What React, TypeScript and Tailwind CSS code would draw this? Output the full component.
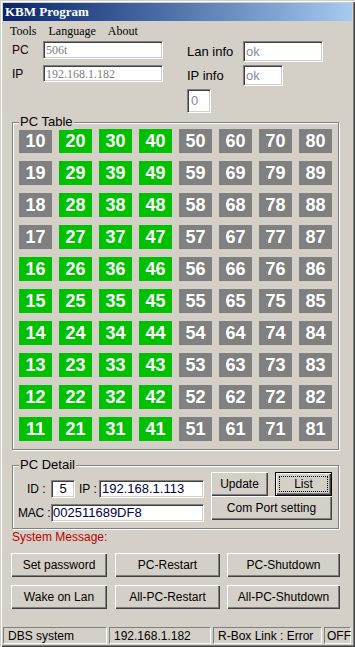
import React from "react";

const sans = "font-['Liberation_Sans',Arial,sans-serif]";
const serif = "font-['Liberation_Serif','Times_New_Roman',serif]";
const sunken =
  "bg-white border border-t-[#808080] border-l-[#808080] border-b-white border-r-white shadow-[inset_1px_1px_0_#404040,inset_-1px_-1px_0_#d4d0c8]";
const raised =
  "bg-[#d4d0c8] shadow-[inset_1px_1px_0_#ffffff,inset_-1px_-1px_0_#404040,inset_-2px_-2px_0_#808080]";
const panel =
  "border border-t-[#808080] border-l-[#808080] border-b-white border-r-white";

function Btn({ w, children }: { w: string; children: React.ReactNode }) {
  return (
    <div className={`${raised} ${w} h-[24px] flex items-center justify-center text-[12px] text-black`}>
      {children}
    </div>
  );
}

export default function App() {
  const rows = Array.from({ length: 10 }, (_, r) => r);
  const cols = [1, 2, 3, 4, 5, 6, 7, 8];
  return (
    <div
      className={`w-[355px] h-[647px] bg-[#d4d0c8] p-[3px] flex flex-col ${sans} shadow-[inset_1px_1px_0_#d4d0c8,inset_2px_2px_0_#ffffff,inset_-1px_-1px_0_#404040,inset_-2px_-2px_0_#808080]`}
    >
      {/* Title bar */}
      <div className={`h-[18px] bg-gradient-to-r from-[#0a246a] to-[#a6caf0] flex items-center pl-[2px] text-white font-bold text-[13px] ${serif}`}>
        KBM Program
      </div>
      {/* Menu */}
      <div className={`h-[19px] flex items-center gap-[12px] pl-[7px] text-[12px] text-black ${serif}`}>
        <span>Tools</span>
        <span>Language</span>
        <span>About</span>
      </div>
      {/* Top section */}
      <div className="flex h-[73px] ml-[9px]">
        <div className="w-[175px] flex flex-col">
          <div className="mt-[1px] flex items-center h-[18px]">
            <span className="w-[31px] text-[12px] text-[#200000]">PC</span>
            <div className={`${sunken} w-[120px] h-[18px] flex items-center pl-[2px] text-[12px] text-[#808080] ${serif}`}>506t</div>
          </div>
          <div className="mt-[6px] flex items-center h-[17px]">
            <span className="w-[31px] text-[12px] text-black">IP</span>
            <div className={`${sunken} w-[120px] h-[17px] flex items-center pl-[2px] text-[12px] text-[#808080] ${serif}`}>192.168.1.182</div>
          </div>
        </div>
        <div className="flex flex-col">
          <div className="mt-[1px] flex items-center h-[21px]">
            <span className="w-[56px] text-[13px] text-black">Lan info</span>
            <div className={`${sunken} w-[80px] h-[21px] flex items-center pl-[2px] text-[13px] text-[#8a8aa0]`}>ok</div>
          </div>
          <div className="mt-[3px] flex items-center h-[21px]">
            <span className="w-[56px] text-[13px] text-black">IP info</span>
            <div className={`${sunken} w-[40px] h-[21px] flex items-center pl-[2px] text-[13px] text-[#8a8aa0]`}>ok</div>
          </div>
          <div className="mt-[3px] flex">
            <div className={`${sunken} w-[24px] h-[24px] flex items-center pl-[3px] text-[13px] text-[#8a8aa0]`}>0</div>
          </div>
        </div>
      </div>
      {/* PC Table */}
      <div className="relative ml-[9px] mt-[9px] w-[327px] h-[328px] border border-[#808080] shadow-[inset_1px_1px_0_#ffffff,1px_1px_0_#ffffff] pl-[6px] pt-[6px]">
        <span className="absolute left-[6px] top-[-9px] px-[1px] bg-[#d4d0c8] text-[13px] leading-[16px] text-black">PC Table</span>
        <div className="grid grid-cols-[repeat(8,33px)] grid-rows-[repeat(10,24px)] gap-x-[7px] gap-y-[8px]">
          {rows.map((r) =>
            cols.map((c) => {
              const v = c * 10 + (r === 0 ? 0 : 10 - r);
              const green = (c >= 2 && c <= 4) || (c === 1 && r >= 4);
              return (
                <div
                  key={`${r}-${c}`}
                  className={`${green ? "bg-[#00c000]" : "bg-[#808080]"} flex items-center justify-center text-white font-bold text-[18px] leading-none`}
                >
                  {v}
                </div>
              );
            })
          )}
        </div>
      </div>
      {/* PC Detail */}
      <div className="relative ml-[9px] mt-[15px] w-[327px] h-[64px] border border-[#808080] shadow-[inset_1px_1px_0_#ffffff,1px_1px_0_#ffffff] flex">
        <span className="absolute left-[6px] top-[-9px] px-[1px] bg-[#d4d0c8] text-[13px] leading-[16px] text-black">PC Detail</span>
        <div className="w-[198px] pt-[14px] flex flex-col">
          <div className="flex items-center h-[18px] text-[12px] text-black whitespace-nowrap">
            <span className="ml-[14px] w-[24px]">ID :</span>
            <div className={`${sunken} w-[24px] h-[18px] flex items-center justify-center text-[13px]`}>5</div>
            <span className="ml-[4px] w-[20px]">IP :</span>
            <div className={`${sunken} w-[105px] h-[18px] flex items-center pl-[2px] text-[13px] text-[#000040]`}>192.168.1.113</div>
          </div>
          <div className="mt-[6px] flex items-center h-[18px] text-[12px] text-black whitespace-nowrap">
            <span className="ml-[5px] w-[33px] tracking-[-0.2px]">MAC :</span>
            <div className={`${sunken} w-[153px] h-[18px] flex items-center pl-[1px] text-[13px] text-[#000040]`}>002511689DF8</div>
          </div>
        </div>
        <div className="pt-[6px] flex flex-col">
          <div className="flex gap-[7px]">
            <Btn w="w-[57px]">Update</Btn>
            <div className="w-[57px] h-[24px] p-[4px] bg-[#d4d0c8] shadow-[inset_0_0_0_1px_#000000,inset_2px_2px_0_#ffffff,inset_-2px_-2px_0_#404040,inset_-3px_-3px_0_#808080]">
              <div className="w-full h-full border border-dotted border-black flex items-center justify-center text-[12px] text-black">
                List
              </div>
            </div>
          </div>
          <Btn w="w-[121px]">Com Port setting</Btn>
        </div>
      </div>
      {/* System message */}
      <div className="ml-[9px] h-[16px] leading-[16px] text-[12px] text-[#c00000]">System Message:</div>
      {/* Buttons */}
      <div className="mt-[8px] ml-[8px] flex">
        <Btn w="w-[96px]">Set password</Btn>
        <div className="w-[8px]" />
        <Btn w="w-[105px]">PC-Restart</Btn>
        <div className="w-[7px]" />
        <Btn w="w-[113px]">PC-Shutdown</Btn>
      </div>
      <div className="mt-[8px] ml-[8px] flex">
        <Btn w="w-[96px]">Wake on Lan</Btn>
        <div className="w-[8px]" />
        <Btn w="w-[105px]">All-PC-Restart</Btn>
        <div className="w-[7px]" />
        <Btn w="w-[113px]">All-PC-Shutdown</Btn>
      </div>
      {/* Status bar */}
      <div className="mt-auto h-[17px] flex gap-[2px] text-[12px] text-black">
        <div className={`${panel} w-[104px] flex items-center pl-[4px]`}>DBS system</div>
        <div className={`${panel} w-[102px] flex items-center pl-[4px]`}>192.168.1.182</div>
        <div className={`${panel} w-[109px] flex items-center pl-[4px]`}>R-Box Link : Error</div>
        <div className={`${panel} w-[27px] flex items-center pl-[2px]`}>OFF</div>
      </div>
    </div>
  );
}
